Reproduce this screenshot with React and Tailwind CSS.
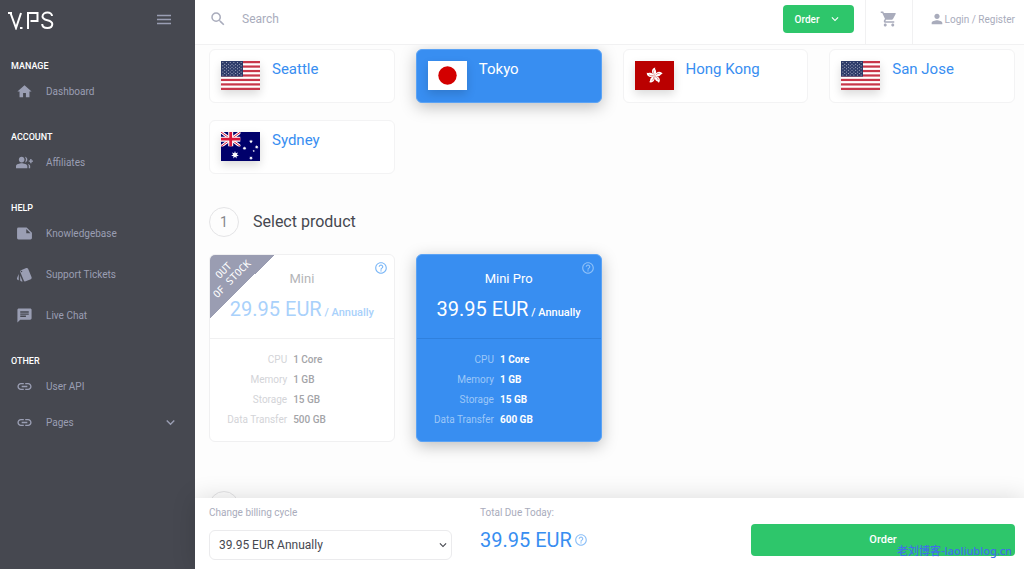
import React, { useState } from 'react';
import {
  MdMenu,
  MdHome,
  MdGroupAdd,
  MdStyle,
  MdChat,
  MdLink,
  MdExpandMore,
  MdSearch,
  MdShoppingCart,
  MdPerson,
  MdHelpOutline
} from 'react-icons/md';

const NoteIcon = ({ className }) => (
  <svg viewBox="0 0 24 24" fill="currentColor" className={className}>
    <path d="M15 3.5H3.5A2 2 0 0 0 1.500 5.500v13a2 2 0 0 0 2 2h17a2 2 0 0 0 2-2V11zM14.500 5.500L20.500 11.500h-6z" fillRule="evenodd" />
  </svg>
);

const Logo = () => (
  <svg viewBox="0 0 46 20" className="w-[46px] h-5" fill="none" stroke="#fff" strokeWidth="2">
    <path d="M0 3h4M2.500 3l5.500 15L13 3" />
    <path d="M12 18h2.500" />
    <path d="M20 19V3h9.500v8h-7" />
    <path d="M44 6c0-2-2-3.500-4.500-3.500S34.500 4 34.500 6.500c0 5 9.800 2.500 9.800 7.500 0 2.500-2 4-4.900 4s-5.200-1.500-5.200-4" />
  </svg>
);

const UsFlag = () => (
  <svg viewBox="0 0 39 29" className="w-full h-full" preserveAspectRatio="none">
    <rect width="39" height="29" fill="#fff" />
    {[0, 2, 4, 6, 8, 10, 12].map(i => (
      <rect key={i} y={i * 2.23} width="39" height="2.23" fill="#c8374a" />
    ))}
    <rect width="22" height="15.6" fill="#2c3a68" />
    {[0, 1, 2, 3, 4, 5, 6, 7, 8].map(row =>
      [0, 1, 2, 3, 4, 5].map(col => (
        (row % 2 === 0 || col < 5) && (
          <circle key={`${row}-${col}`} cx={1.9 + col * 3.65 + (row % 2) * 1.82} cy={1.6 + row * 1.55} r="0.5" fill="#c9cfdf" />
        )
      ))
    )}
  </svg>
);

const JpFlag = () => (
  <svg viewBox="0 0 39 29" className="w-full h-full" preserveAspectRatio="none">
    <rect width="39" height="29" fill="#fff" />
    <circle cx="19.5" cy="14.5" r="9.2" fill="#d30000" />
  </svg>
);

const HkFlag = () => (
  <svg viewBox="0 0 39 29" className="w-full h-full" preserveAspectRatio="none">
    <rect width="39" height="29" fill="#ba0000" />
    {[0, 72, 144, 216, 288].map(angle => (
      <g key={angle} transform={`translate(19.5 14.8) rotate(${angle})`}>
        <path d="M0 0C-3.500-2.500-3.300-7.500 .8-8.300C-.3-6.500 2.400-5.500 1.500-2.800C1.200-1.300.5-.7 0 0z" fill="#fff" />
        <path d="M0-1C-1.300-3-1.300-4.300-.5-5.500" fill="none" stroke="#ba0000" strokeWidth="0.4" />
      </g>
    ))}
  </svg>
);

const star = (cx, cy, r, points) => {
  const list = [];
  for (let i = 0; i < points * 2; i++) {
    const rad = i % 2 === 0 ? r : r * 0.48;
    const a = (Math.PI * i) / points - Math.PI / 2;
    list.push(`${(cx + rad * Math.cos(a)).toFixed(2)},${(cy + rad * Math.sin(a)).toFixed(2)}`);
  }
  return list.join(' ');
};

const AuFlag = () => (
  <svg viewBox="0 0 39 29" className="w-full h-full" preserveAspectRatio="none">
    <rect width="39" height="29" fill="#00006b" />
    <svg width="19.5" height="14.5" viewBox="0 0 19.5 14.5">
      <path d="M0 0l19.500 14.500M19.500 0L0 14.500" stroke="#fff" strokeWidth="3" />
      <path d="M0 0l19.500 14.500M19.500 0L0 14.500" stroke="#d8173a" strokeWidth="1" />
      <path d="M9.700 0v14.500M0 7.200h19.500" stroke="#fff" strokeWidth="5" />
      <path d="M9.700 0v14.500M0 7.200h19.500" stroke="#d8173a" strokeWidth="2.800" />
    </svg>
    <g fill="#fff">
      <polygon points={star(14, 23, 3.9, 7)} />
      <polygon points={star(30, 9.5, 2, 7)} />
      <polygon points={star(23.5, 16.3, 2, 7)} />
      <polygon points={star(35.7, 15, 2, 7)} />
      <polygon points={star(30, 26, 2, 7)} />
      <polygon points={star(32.7, 19, 1.2, 5)} />
    </g>
  </svg>
);

const menu = [
  { title: 'MANAGE', items: [{ label: 'Dashboard', icon: MdHome }] },
  { title: 'ACCOUNT', items: [{ label: 'Affiliates', icon: MdGroupAdd }] },
  {
    title: 'HELP',
    items: [
      { label: 'Knowledgebase', icon: NoteIcon },
      { label: 'Support Tickets', icon: MdStyle },
      { label: 'Live Chat', icon: MdChat }
    ]
  },
  {
    title: 'OTHER',
    tight: true,
    items: [
      { label: 'User API', icon: MdLink },
      { label: 'Pages', icon: MdLink, expandable: true }
    ]
  }
];

const locations = [
  { name: 'Seattle', flag: UsFlag },
  { name: 'Tokyo', flag: JpFlag },
  { name: 'Hong Kong', flag: HkFlag },
  { name: 'San Jose', flag: UsFlag },
  { name: 'Sydney', flag: AuFlag }
];

const products = [
  {
    name: 'Mini',
    price: '29.95 EUR',
    soldOut: true,
    specs: [['CPU', '1 Core'], ['Memory', '1 GB'], ['Storage', '15 GB'], ['Data Transfer', '500 GB']]
  },
  {
    name: 'Mini Pro',
    price: '39.95 EUR',
    soldOut: false,
    specs: [['CPU', '1 Core'], ['Memory', '1 GB'], ['Storage', '15 GB'], ['Data Transfer', '600 GB']]
  }
];

const Sidebar = () => (
  <aside className="w-[195px] shrink-0 bg-[#464850] text-[#9a9eb3]">
    <div className="flex items-center justify-between h-10 pl-2 pr-[22px]">
      <a href="#" aria-label="V.PS"><Logo /></a>
      <button type="button" aria-label="Toggle menu">
        <svg viewBox="0 0 18 18" className="w-[18px] h-[18px]" fill="none" stroke="currentColor">
          <path d="M2 4.500h14M2 8.500h14M2 12.500h14" strokeWidth="1.300" />
        </svg>
      </button>
    </div>
    <nav className="flex flex-col gap-[21px] pt-4">
      {menu.map(group => (
        <div key={group.title}>
          <h3 className="h-5 pl-[11px] text-[9px] leading-5 font-medium text-white">{group.title}</h3>
          <ul className={`flex flex-col ${group.tight ? 'gap-1.5' : 'gap-[11px]'}`}>
            {group.items.map(item => (
              <li key={item.label}>
                <a href="#" className="flex items-center h-[30px] pl-4 pr-4 text-[10px]">
                  <item.icon className="w-[17px] h-[17px] shrink-0" />
                  <span className="ml-[13px] flex-1">{item.label}</span>
                  {item.expandable && <MdExpandMore className="w-[17px] h-[17px]" stroke="currentColor" />}
                </a>
              </li>
            ))}
          </ul>
        </div>
      ))}
    </nav>
  </aside>
);

const Header = () => (
  <header className="flex h-[45px] shrink-0 items-stretch bg-white border-b border-[#f1f1f2] text-[#a9acbc]">
    <div className="flex flex-1 items-center pl-[14px] pb-1.5">
      <MdSearch className="w-[18px] h-[18px]" />
      <input
        type="search"
        aria-label="Search"
        placeholder="Search"
        className="ml-[15px] flex-1 text-xs outline-none placeholder:text-[#a9acbc]"
      />
    </div>
    <div className="flex items-center pb-1.5 pr-[11px]">
      <button type="button" className="flex items-center justify-between w-[71px] h-7 pl-3 pr-3 rounded bg-[#2ec66b] text-white text-[10px] font-medium">
        Order
        <MdExpandMore className="w-3.5 h-3.5" />
      </button>
    </div>
    <div className="flex w-12 items-center justify-center pb-1.5 border-x border-[#f1f1f2]">
      <button type="button" aria-label="Cart">
        <MdShoppingCart className="w-[18px] h-[18px]" />
      </button>
    </div>
    <a href="#" className="flex items-center pb-1.5 pl-4 pr-[9px] text-[10px]">
      <MdPerson className="w-4 h-4" />
      Login / Register
    </a>
  </header>
);

const LocationCard = ({ location, active, onSelect }) => {
  const Flag = location.flag;
  return (
    <button
      type="button"
      aria-pressed={active}
      onClick={onSelect}
      className={`flex items-start h-[54px] pl-[11px] pt-[11px] rounded-md border text-left ${
        active
          ? 'bg-[#388ef1] border-[#5ba3f5] text-white shadow-[0_4px_16px_rgba(0,0,0,0.25)]'
          : 'bg-white border-[#f3f3f4] text-[#388ef1]'
      }`}
    >
      <span className="w-[39px] h-[29px] shrink-0 shadow-[0_4px_10px_rgba(0,0,0,0.15)]"><Flag /></span>
      <span className="ml-3 text-[15px] leading-4">{location.name}</span>
    </button>
  );
};

const Step = ({ number, title }) => (
  <div className="flex items-center gap-[14px]">
    <span className="flex w-[30px] h-[30px] items-center justify-center rounded-full border border-[#e4e4e6] text-sm text-[#85878c]">
      {number}
    </span>
    {title && <h2 className="text-base leading-6 text-[#464850]">{title}</h2>}
  </div>
);

const ProductCard = ({ product }) => {
  const { soldOut } = product;
  return (
    <article
      className={`relative h-[188px] rounded-md border overflow-hidden ${
        soldOut
          ? 'bg-white border-[#f0f0f1]'
          : 'bg-[#388ef1] border-[#5ba3f5] text-white shadow-[0_4px_16px_rgba(0,0,0,0.25)]'
      }`}
    >
      {soldOut && (
        <div className="absolute left-0 top-0 w-16 h-16 bg-[linear-gradient(135deg,#9a9db2_50%,transparent_50%)]">
          <div className="absolute -left-3 top-2 w-[60px] -rotate-45 text-center font-['DejaVu_Sans_Mono',monospace] text-[10px] leading-3 text-white">
            OUT<br />OF STOCK
          </div>
        </div>
      )}
      <button
        type="button"
        aria-label="Product details"
        className={`absolute right-1.5 top-1.5 ${soldOut ? 'text-[#7db8f7]' : 'text-[#8dc0f8]'}`}
      >
        <MdHelpOutline className="w-[14px] h-[14px]" />
      </button>
      <div className={`h-[84px] pt-4 text-center border-b ${soldOut ? 'border-[#f0f0f1]' : 'border-[#2f80dd]'}`}>
        <h3 className={`text-[13px] leading-4 ${soldOut ? 'text-[#b4b5b8]' : ''}`}>{product.name}</h3>
        <p className={`mt-2 text-xl leading-7 whitespace-nowrap ${soldOut ? 'text-[#a9d1fb]' : ''}`}>
          {product.price}
          <span className="text-[11px] font-medium"> / Annually</span>
        </p>
      </div>
      <dl className="pt-[11px] text-[10px] leading-5">
        {product.specs.map(([label, value]) => (
          <div key={label} className="grid grid-cols-[42%_1fr] gap-1.5">
            <dt className={`text-right ${soldOut ? 'text-[#d3d4d8]' : 'text-[#9cc7f8]'}`}>{label}</dt>
            <dd className={soldOut ? 'font-medium text-[#a3a4a8]' : 'font-bold text-white'}>{value}</dd>
          </div>
        ))}
      </dl>
    </article>
  );
};

const OrderBar = () => (
  <footer className="relative shrink-0 grid grid-cols-[243fr_243fr_264fr] gap-7 pl-[14px] pr-[9px] pt-[7px] pb-[9px] bg-white shadow-[0_0_24px_rgba(0,0,0,0.14)]">
    <div>
      <label htmlFor="cycle" className="block text-[10px] leading-4 text-[#a9acbc]">Change billing cycle</label>
      <div className="relative mt-[9px]">
        <select
          id="cycle"
          className="w-full h-[30px] pl-[9px] appearance-none rounded-md border border-[#ebebed] bg-white text-xs text-[#464850]"
        >
          <option>39.95 EUR Annually</option>
        </select>
        <MdExpandMore className="absolute right-0.5 top-2 w-3.5 h-3.5 text-[#464850] pointer-events-none" />
      </div>
    </div>
    <div>
      <p className="text-[10px] leading-4 text-[#a9acbc]">Total Due Today:</p>
      <p className="flex items-center gap-0.5 mt-[5px] text-xl leading-7 text-[#388ef1]">
        39.95 EUR
        <MdHelpOutline className="w-[14px] h-[14px] text-[#8dc0f8]" />
      </p>
    </div>
    <button type="button" className="mt-[19px] h-8 rounded bg-[#2ec66b] text-white text-[11px] font-medium">
      Order
    </button>
    <span className="absolute right-3 bottom-2.5 text-[11px] leading-4 font-medium text-[#3f6fe8] font-['Noto_Sans','Noto_Sans_CJK_SC',sans-serif]">
      老刘博客-laoliublog.cn
    </span>
  </footer>
);

const App = () => {
  const [selected, setSelected] = useState('Tokyo');

  return (
    <div className="flex h-screen overflow-hidden bg-[#fdfdfd] font-[Roboto,sans-serif]">
      <Sidebar />
      <div className="flex flex-1 flex-col min-w-0">
        <Header />
        <main className="flex-1 min-h-0 overflow-hidden pl-[14px] pr-[9px] pt-1">
          <section className="grid grid-cols-4 gap-x-[21px] gap-y-[17px]">
            {locations.map(location => (
              <LocationCard
                key={location.name}
                location={location}
                active={selected === location.name}
                onSelect={() => setSelected(location.name)}
              />
            ))}
          </section>
          <section className="mt-[33px]">
            <Step number={1} title="Select product" />
            <div className="grid grid-cols-4 gap-x-[21px] mt-[17px]">
              {products.map(product => (
                <ProductCard key={product.name} product={product} />
              ))}
            </div>
          </section>
          <section className="mt-[49px]">
            <Step />
          </section>
        </main>
        <OrderBar />
      </div>
    </div>
  );
};

export default App;
